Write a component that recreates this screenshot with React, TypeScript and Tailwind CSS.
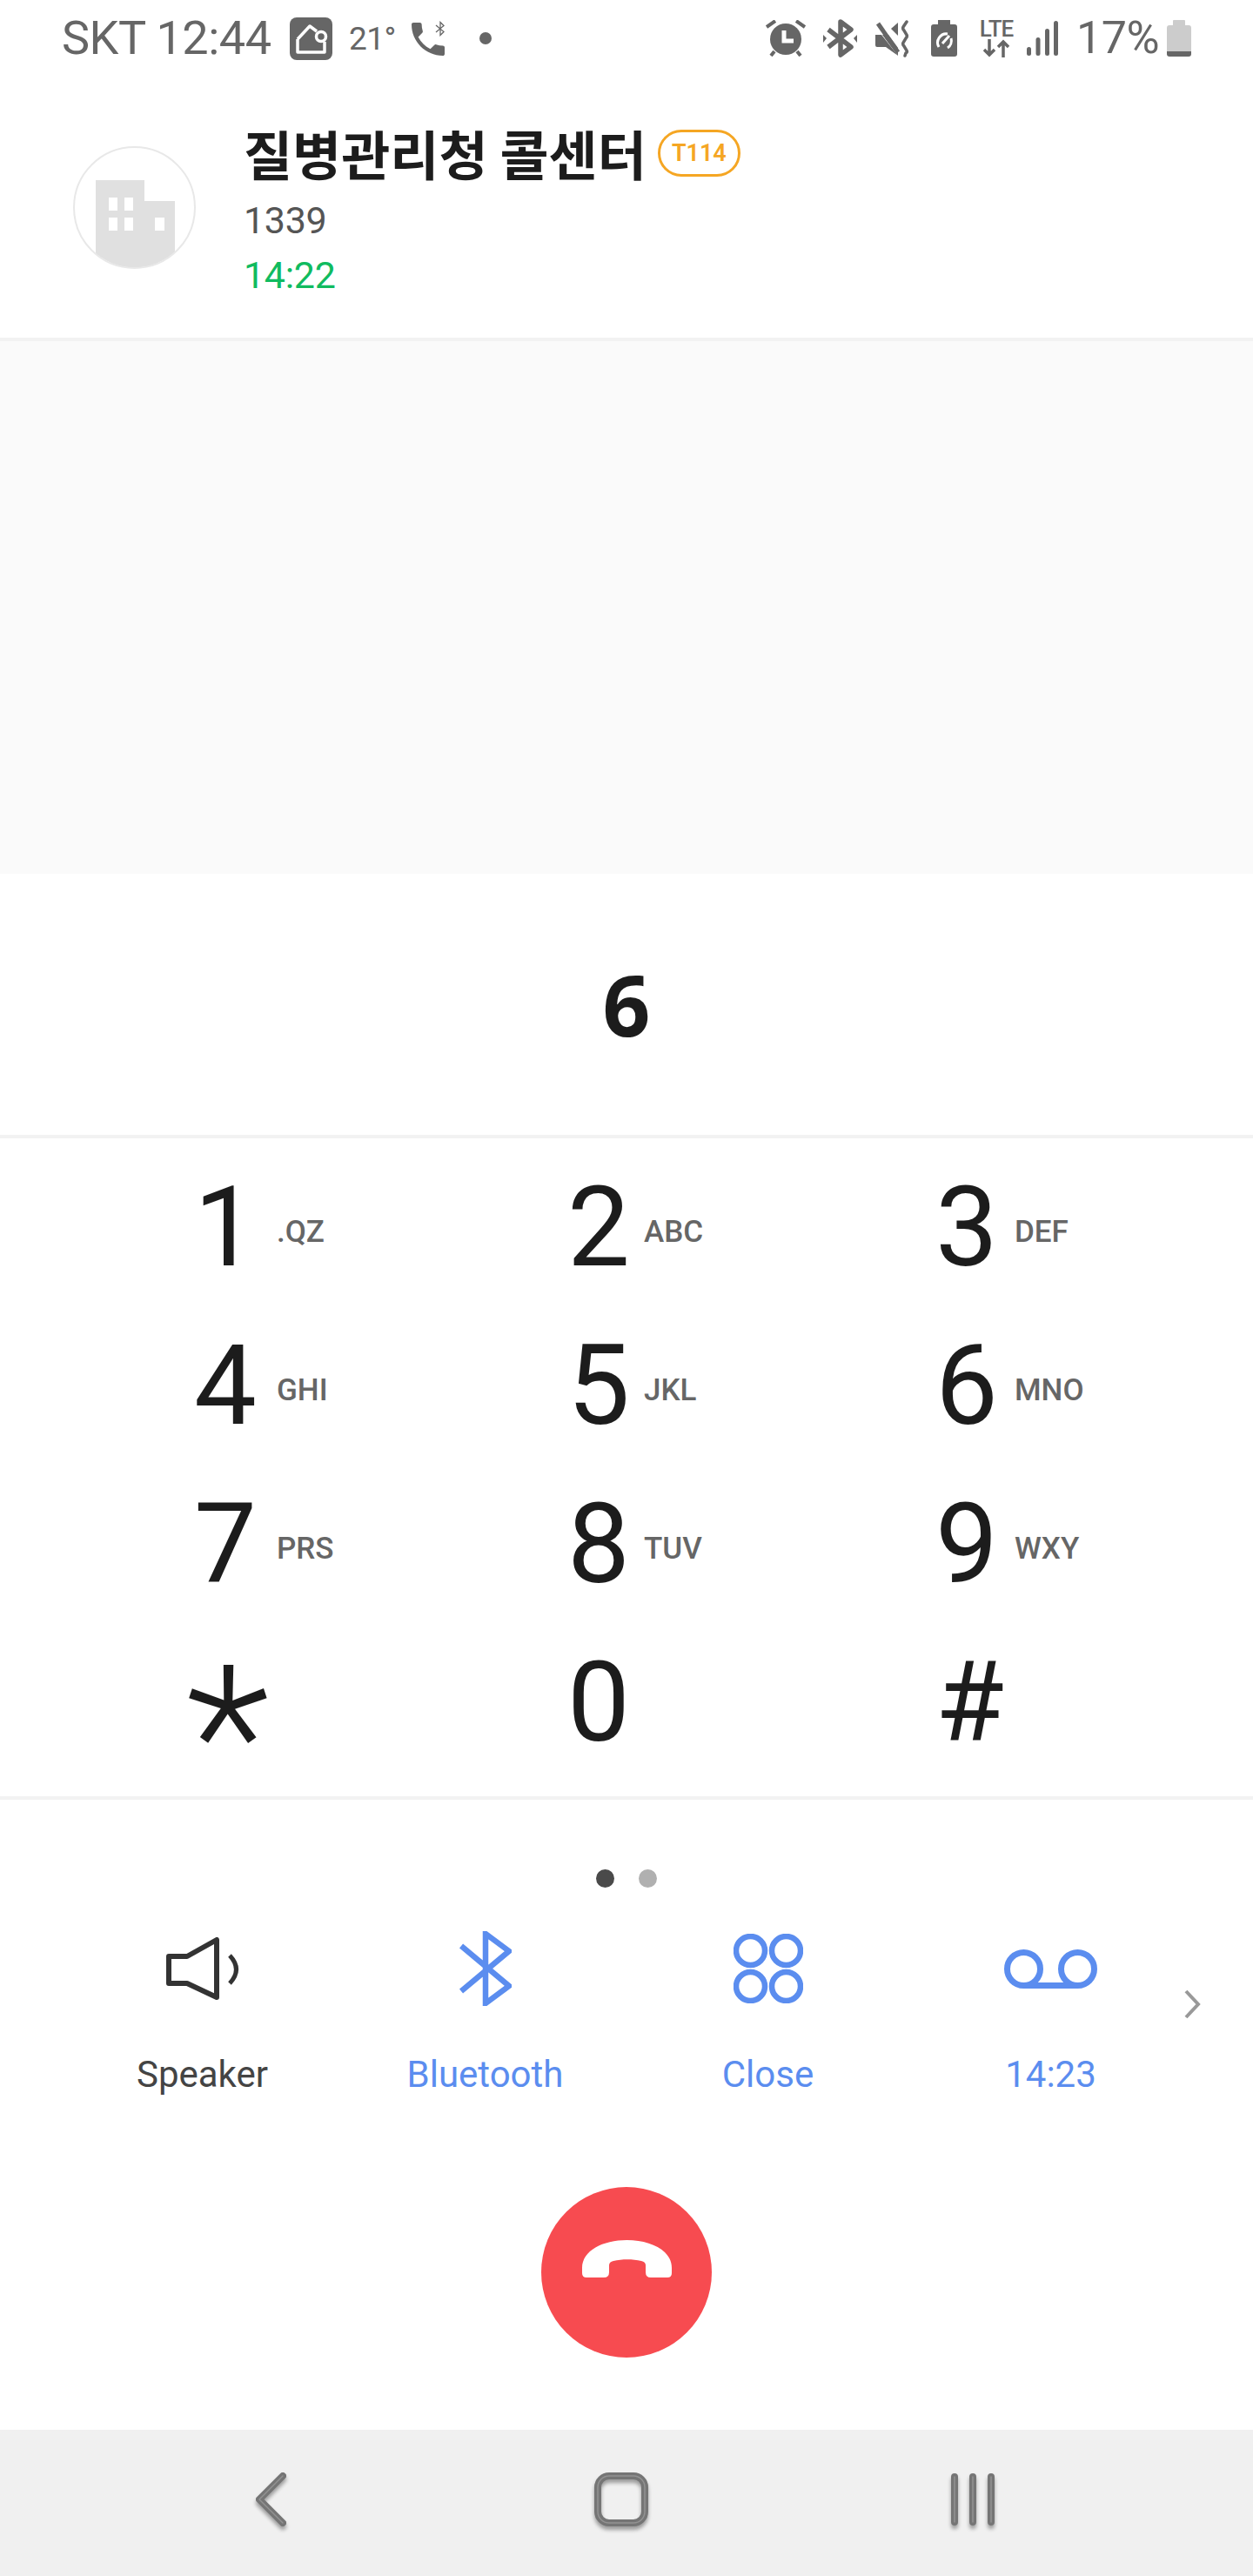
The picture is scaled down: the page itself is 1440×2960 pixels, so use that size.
import React from 'react';

const keys = [
  { digit: '1', letters: '.QZ' },
  { digit: '2', letters: 'ABC' },
  { digit: '3', letters: 'DEF' },
  { digit: '4', letters: 'GHI' },
  { digit: '5', letters: 'JKL' },
  { digit: '6', letters: 'MNO' },
  { digit: '7', letters: 'PRS' },
  { digit: '8', letters: 'TUV' },
  { digit: '9', letters: 'WXY' },
  { digit: '*', letters: '' },
  { digit: '0', letters: '' },
  { digit: '#', letters: '' },
];

// digit cell width per column, the letters start right after it
const digitWidths = ['w-[95px]', 'w-[88px]', 'w-[91px]'];

function StatusBar() {
  return (
    <div className="flex h-[88px] items-center justify-between pl-[71px] pr-[71px] text-[#666666]">
      {/* Left side */}
      <div className="flex items-center">
        <span className="w-[245px] whitespace-nowrap text-[54px] leading-none tracking-[-0.5px]">SKT 12:44</span>
        <div className="ml-[17px] flex h-[49px] w-[49px] items-center justify-center rounded-lg bg-[#666666]">
          <svg width="49" height="49" viewBox="0 0 49 49" fill="none" stroke="white" strokeWidth="3.5">
            <path d="M9 25 L23 10 L31 16 M40 28 V40 H9 V25" strokeLinejoin="round" />
            <circle cx="36" cy="22" r="5.5" fill="#666666" />
          </svg>
        </div>
        <span className="ml-[19px] w-[53px] whitespace-nowrap text-[37px] leading-none tracking-[-0.5px]">21°</span>
        <div className="relative ml-[19px] h-[40px] w-[40px]">
          <svg width="38" height="38" viewBox="3 3 18 18" fill="#666666" className="absolute bottom-0 left-0">
            <path d="M6.62 10.79c1.44 2.83 3.76 5.14 6.59 6.59l2.2-2.2c.27-.27.67-.36 1.02-.24 1.12.37 2.33.57 3.57.57.55 0 1 .45 1 1V20c0 .55-.45 1-1 1-9.39 0-17-7.61-17-17 0-.55.45-1 1-1h3.5c.55 0 1 .45 1 1 0 1.25.2 2.45.57 3.57.11.35.03.74-.25 1.02l-2.2 2.2z" />
          </svg>
          <svg width="14" height="18" viewBox="0 0 14 18" fill="none" stroke="#666666" strokeWidth="1.3" className="absolute top-0 right-0">
            <path d="M2 5 L11 12.5 L7 16.5 V1.5 L11 5.5 L2 13" />
          </svg>
        </div>
        <div className="ml-[38px] h-[14px] w-[14px] rounded-full bg-[#666666]" />
      </div>

      {/* Right side */}
      <div className="flex items-center">
        <svg width="46" height="42" viewBox="0 0 46 42" fill="none" stroke="#666666" strokeWidth="4">
          <ellipse cx="23" cy="22" rx="18" ry="18" fill="#666666" stroke="none" />
          <path d="M21 12 V24 H32" stroke="white" strokeWidth="5" />
          <path d="M1 8 L11 1 M35 1 L45 8 M6 41 L10 36 M40 41 L36 36" />
        </svg>
        <svg width="39" height="44" viewBox="0 0 39 44" fill="none" stroke="#666666" strokeWidth="5.5" className="ml-[20px]">
          <path d="M6 12 L32 32 L20 41 V3 L32 12 L6 32" strokeLinejoin="round" />
          <path d="M0 18 L4 22 L0 27 Z M39 18 L35 22 L39 27 Z" fill="#666666" stroke="none" />
        </svg>
        <svg width="42" height="44" viewBox="0 0 42 44" fill="none" className="ml-[20px]">
          <path d="M1 18 H8 L27 42 L13 32 H3 Q1 32 1 30 Z" fill="#666666" />
          <path d="M9 18 H16 L27 33 V42 Z" fill="#666666" />
          <path d="M19 11 L27 4 V19 Z" fill="#666666" />
          <path d="M4 5 L27 38" stroke="#666666" strokeWidth="5" />
          <path d="M37 3 L33 9 Q32 11 34 13 L37 18 Q38 20 36 22 L33 27 Q32 29 34 31 L37 36 Q38 38 36 39 L35 42" stroke="#666666" strokeWidth="3.5" strokeLinecap="round" />
        </svg>
        <svg width="30" height="42" viewBox="0 0 30 42" fill="none" className="ml-[23px]">
          <path d="M8 0 H22 V5 H27 Q30 5 30 8 V39 Q30 42 27 42 H3 Q0 42 0 39 V8 Q0 5 3 5 H8 Z" fill="#666666" />
          <path d="M9 31 A10 10 0 0 1 19 16 M13 27 L21 18 M23 21 A10 10 0 0 1 19 32" stroke="white" strokeWidth="3" />
        </svg>
        <div className="ml-[25px] flex w-[40px] flex-col items-center">
          <span className="text-[26px] leading-[22px] font-medium tracking-[-1px]">LTE</span>
          <svg width="30" height="21" viewBox="0 0 30 21" fill="none" stroke="#666666" strokeWidth="3.5" className="mt-[1px]">
            <path d="M7 0 V18 M1 12 L7 18 L13 12 M23 21 V3 M17 9 L23 3 L29 9" />
          </svg>
        </div>
        <svg width="36" height="40" viewBox="0 0 36 40" fill="#666666" className="ml-[15px]">
          <rect x="0" y="30" width="5" height="10" rx="2.5" />
          <rect x="10.5" y="19" width="5" height="21" rx="2.5" />
          <rect x="21" y="9" width="5" height="31" rx="2.5" />
          <rect x="31" y="0" width="5" height="40" rx="2.5" />
        </svg>
        <span className="ml-[21px] w-[104px] whitespace-nowrap text-[52px] leading-none tracking-[-0.5px]">17%</span>
        <svg width="28" height="42" viewBox="0 0 28 42">
          <path d="M7 1 Q7 0 8 0 H20 Q21 0 21 1 V6 H25 Q28 6 28 9 V36 H0 V9 Q0 6 3 6 H7 Z" fill="#cccccc" />
          <path d="M0 36 H28 V39 Q28 42 25 42 H3 Q0 42 0 39 Z" fill="#666666" />
        </svg>
      </div>
    </div>
  );
}

function CallerHeader() {
  return (
    <div className="flex h-[304px] border-b-4 border-[#f2f2f2] pt-[60px] pl-[84px]">
      <svg width="141" height="141" viewBox="0 0 141 141" className="mt-[20px]">
        <defs>
          <clipPath id="avatar-clip">
            <circle cx="70.5" cy="70.5" r="69" />
          </clipPath>
        </defs>
        <g clipPath="url(#avatar-clip)">
          <path d="M26 39 H82 V63 H117 V141 H26 Z" fill="#e0e0e0" />
          <path d="M41 59 H51 V74 H41 Z M59 59 H69 V74 H59 Z M41 82 H51 V97 H41 Z M59 82 H69 V97 H59 Z M94 82 H105 V97 H94 Z" fill="white" />
        </g>
        <circle cx="70.5" cy="70.5" r="69.5" fill="none" stroke="#e8e8e8" strokeWidth="2" />
      </svg>
      <div className="ml-[55px] flex flex-col">
        <div className="-mt-[2px] flex items-center">
          <span className="font-['Noto_Sans_CJK_KR',sans-serif] text-[61px] leading-[60px] font-bold whitespace-nowrap text-[#1c1c1c]">
            질병관리청 콜센터
          </span>
          <span className="ml-[13px] flex h-[54px] w-[95px] items-center justify-center rounded-full border-[3px] border-[#f5a623] text-[27px] leading-none font-semibold text-[#f5a623]">
            T114
          </span>
        </div>
        <span className="mt-[22px] text-[43px] leading-[50px] tracking-[-0.3px] text-[#555555]">1339</span>
        <span className="mt-[13px] text-[43px] leading-[50px] tracking-[-0.3px] text-[#10bb5f]">14:22</span>
      </div>
    </div>
  );
}

function Keypad() {
  return (
    <div className="grid grid-cols-[429px_423px_auto] border-y-4 border-[#f2f2f2] pt-[11px] pb-[17px] pl-[223px]">
      {keys.map((key, i) => (
        <div key={key.digit} className="flex h-[182px] items-center">
          <span className={`${digitWidths[i % 3]} text-[128px] leading-none text-[#1c1c1c]`}>
            {key.digit === '*' ? (
              <span className="inline-block translate-x-[-9px] translate-y-[56px] text-[225px] leading-[128px] font-light">*</span>
            ) : (
              key.digit
            )}
          </span>
          {key.letters && (
            <span className="mt-[10px] text-[35px] leading-none font-medium text-[#666666]">{key.letters}</span>
          )}
        </div>
      ))}
    </div>
  );
}

function CallActions() {
  return (
    <div className="flex items-start pl-[70px]">
      <div className="grid w-[1300px] grid-cols-4">
        <div className="flex flex-col items-center text-[#444444]">
          <svg width="84" height="72" viewBox="0 0 84 72" fill="none" stroke="#333333" strokeWidth="6" className="my-[9px]">
            <path d="M3 22 H24 L58 3 V69 L24 53 H3 Z" strokeLinejoin="round" />
            <path d="M73 21 Q88 37 73 53" strokeWidth="5" />
          </svg>
          <span className="mt-[52px] text-[42px] leading-[50px]">Speaker</span>
        </div>
        <div className="flex flex-col items-center text-[#5b8def]">
          <svg width="60" height="86" viewBox="0 0 60 86" fill="none" stroke="#5b8def" strokeWidth="6.5" className="my-[2px]">
            <path d="M2 17 L57 63 L30 83 V3 L57 23 L2 69" />
          </svg>
          <span className="mt-[52px] text-[42px] leading-[50px]">Bluetooth</span>
        </div>
        <div className="flex flex-col items-center text-[#5b8def]">
          <svg width="80" height="80" viewBox="0 0 80 80" fill="none" stroke="#5b8def" strokeWidth="6.5" className="my-[5px]">
            <circle cx="19.5" cy="19.5" r="16.5" />
            <circle cx="60.5" cy="19.5" r="16.5" />
            <circle cx="19.5" cy="60.5" r="16.5" />
            <circle cx="60.5" cy="60.5" r="16.5" />
          </svg>
          <span className="mt-[52px] text-[42px] leading-[50px]">Close</span>
        </div>
        <div className="flex flex-col items-center text-[#5b8def]">
          <svg width="107" height="45" viewBox="0 0 107 45" fill="none" stroke="#5b8def" strokeWidth="7" className="my-[22.5px]">
            <circle cx="22.5" cy="22.5" r="19" />
            <circle cx="84.5" cy="22.5" r="19" />
            <path d="M22 41.5 H85" />
          </svg>
          <span className="mt-[52px] text-[42px] leading-[50px]">14:23</span>
        </div>
      </div>
      <svg width="20" height="34" viewBox="0 0 20 34" fill="none" stroke="#999999" strokeWidth="4" className="mt-[69px] -ml-[10px]">
        <path d="M3 2 L17 17 L3 32" />
      </svg>
    </div>
  );
}

function NavBar() {
  return (
    <div className="flex h-[168px] items-center bg-[#f0f0f0] pb-[8px] pl-[292px]">
      <svg width="38" height="64" viewBox="0 0 38 64" fill="none" strokeLinecap="round" strokeLinejoin="round" className="drop-shadow-[0_4px_2px_rgba(0,0,0,0.35)]">
        <path d="M33 5 L6 32 L33 59" stroke="#757575" strokeWidth="8" />
        <path d="M33 5 L6 32 L33 59" stroke="#929292" strokeWidth="1.5" />
      </svg>
      <svg width="64" height="64" viewBox="0 0 64 64" fill="none" className="ml-[352px] drop-shadow-[0_4px_2px_rgba(0,0,0,0.35)]">
        <rect x="5" y="5" width="54" height="54" rx="13" stroke="#757575" strokeWidth="8" />
        <rect x="5" y="5" width="54" height="54" rx="13" stroke="#929292" strokeWidth="1.5" />
      </svg>
      <svg width="56" height="64" viewBox="0 0 56 64" fill="none" strokeLinecap="round" className="ml-[344px] drop-shadow-[0_4px_2px_rgba(0,0,0,0.35)]">
        <path d="M7 6 V58 M28 6 V58 M49 6 V58" stroke="#757575" strokeWidth="8" />
        <path d="M7 6 V58 M28 6 V58 M49 6 V58" stroke="#929292" strokeWidth="1.5" />
      </svg>
    </div>
  );
}

export default function App() {
  return (
    <div className="flex h-[2960px] w-[1440px] flex-col overflow-hidden bg-white font-['Roboto',sans-serif]">
      <StatusBar />
      <CallerHeader />

      {/* Empty panel */}
      <div className="h-[612px] bg-[#fafafa]" />

      {/* Dialed number */}
      <div className="flex h-[300px] items-center justify-center">
        <span className="font-['Noto_Sans',sans-serif] text-[96px] leading-none font-bold text-[#1c1c1c]">6</span>
      </div>

      <Keypad />

      {/* Page dots */}
      <div className="mt-[80px] flex justify-center gap-[28px]">
        <div className="h-[21px] w-[21px] rounded-full bg-[#4a4a4a]" />
        <div className="h-[21px] w-[21px] rounded-full bg-[#b0b0b0]" />
      </div>

      <div className="mt-[48px]">
        <CallActions />
      </div>

      {/* End call */}
      <div className="mt-[104px] flex justify-center">
        <div className="flex h-[196px] w-[196px] items-center justify-center rounded-full bg-[#f74b50] pb-[32px]">
          <svg width="103" height="43" viewBox="0 0 103 43" fill="white">
            <path d="M0 38 V32 C0 12 24 0 51.5 0 C79 0 103 12 103 32 V38 Q103 43 98 43 H79 Q73 43 73 37 V29 Q73 25 68 24 C58 21.5 46 21.5 36 24 Q31 25 31 29 V37 Q31 43 25 43 H5 Q0 43 0 38 Z" />
          </svg>
        </div>
      </div>

      <div className="mt-auto">
        <NavBar />
      </div>
    </div>
  );
}
